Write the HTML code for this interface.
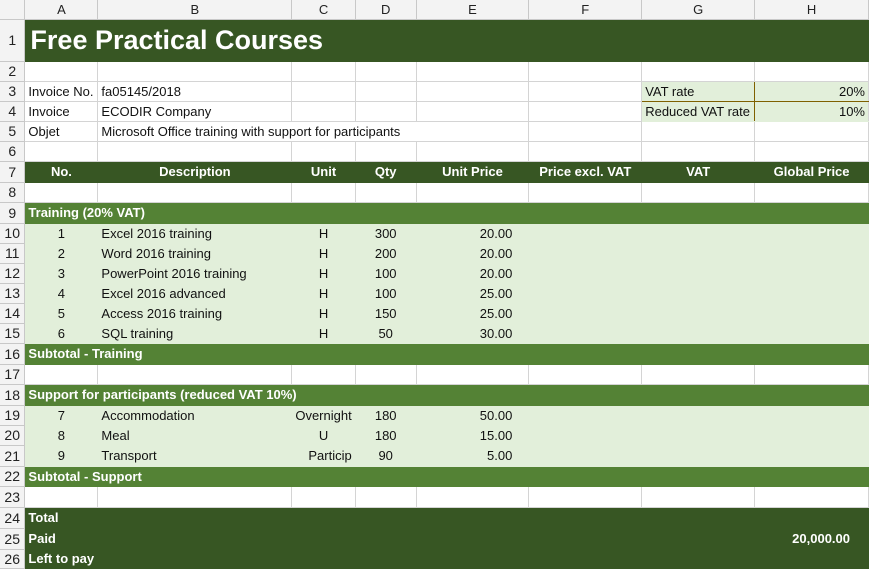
<!DOCTYPE html>
<html><head><meta charset="utf-8"><style>
body{margin:0;background:#fff;width:869px;height:569px;overflow:hidden}
table{border-collapse:collapse;table-layout:fixed;font-family:"Liberation Sans",sans-serif;font-size:13px;color:#111}
td{border-right:1px solid #d4d4d4;border-bottom:1px solid #d4d4d4;padding:0 3px;white-space:nowrap;overflow:visible;line-height:1}
td.h{background:#f3f3f3;color:#222;text-align:center;border-color:#c8c8c8;padding:0;font-size:14px}
tr.ch td{background:#f3f3f3;color:#222;text-align:center;border-color:#c8c8c8}
tr.d td:not(.h){background:#375623;border-color:#375623;color:#fff;font-weight:bold}
tr.m td:not(.h){background:#548235;border-color:#548235;color:#fff;font-weight:bold}
tr.l td:not(.h){background:#e2efda;border-color:#e2efda}
.c{text-align:center}.r{text-align:right;padding-right:16px}
td.lg{background:#e2efda}
</style></head><body>
<table>
<colgroup><col style="width:25px"><col style="width:73px"><col style="width:194px"><col style="width:63px"><col style="width:61px"><col style="width:113px"><col style="width:113px"><col style="width:113px"><col style="width:114px"></colgroup>
<tr class="ch" style="height:19px"><td></td><td>A</td><td>B</td><td>C</td><td>D</td><td>E</td><td>F</td><td>G</td><td>H</td></tr>
<tr class="d" style="height:42px"><td class="h">1</td><td colspan="8" style="font-size:27px;padding-left:5px;overflow:visible">Free Practical Courses</td></tr>
<tr style="height:20px"><td class="h">2</td><td></td><td></td><td></td><td></td><td></td><td></td><td></td><td></td></tr>
<tr style="height:20px"><td class="h">3</td><td>Invoice No.</td><td>fa05145/2018</td><td></td><td></td><td></td><td></td><td class="lg" style="border-right:1px solid #7f6000;border-bottom:1px solid #7f6000">VAT rate</td><td class="lg" style="text-align:right;border-bottom:1px solid #7f6000">20%</td></tr>
<tr style="height:20px"><td class="h">4</td><td>Invoice</td><td>ECODIR Company</td><td></td><td></td><td></td><td></td><td class="lg" style="border-right:1px solid #7f6000;border-bottom-color:#e2efda">Reduced VAT rate</td><td class="lg" style="text-align:right;border-bottom-color:#e2efda">10%</td></tr>
<tr style="height:20px"><td class="h">5</td><td>Objet</td><td colspan="3" style="border-right:none">Microsoft Office training with support for participants</td><td></td><td></td><td></td><td></td></tr>
<tr style="height:20px"><td class="h">6</td><td></td><td></td><td></td><td></td><td></td><td></td><td></td><td></td></tr>
<tr class="d" style="height:21px"><td class="h">7</td><td class="c">No.</td><td class="c">Description</td><td class="c">Unit</td><td class="c">Qty</td><td class="c">Unit Price</td><td class="c">Price excl. VAT</td><td class="c">VAT</td><td class="c">Global Price</td></tr>
<tr style="height:20px"><td class="h">8</td><td></td><td></td><td></td><td></td><td></td><td></td><td></td><td></td></tr>
<tr class="m" style="height:21px"><td class="h">9</td><td colspan="8">Training (20% VAT)</td></tr>
<tr class="l" style="height:20px"><td class="h">10</td><td class="c">1</td><td>Excel 2016 training</td><td class="c">H</td><td class="c">300</td><td class="r">20.00</td><td></td><td></td><td></td></tr>
<tr class="l" style="height:20px"><td class="h">11</td><td class="c">2</td><td>Word 2016 training</td><td class="c">H</td><td class="c">200</td><td class="r">20.00</td><td></td><td></td><td></td></tr>
<tr class="l" style="height:20px"><td class="h">12</td><td class="c">3</td><td>PowerPoint 2016 training</td><td class="c">H</td><td class="c">100</td><td class="r">20.00</td><td></td><td></td><td></td></tr>
<tr class="l" style="height:20px"><td class="h">13</td><td class="c">4</td><td>Excel 2016 advanced</td><td class="c">H</td><td class="c">100</td><td class="r">25.00</td><td></td><td></td><td></td></tr>
<tr class="l" style="height:20px"><td class="h">14</td><td class="c">5</td><td>Access 2016 training</td><td class="c">H</td><td class="c">150</td><td class="r">25.00</td><td></td><td></td><td></td></tr>
<tr class="l" style="height:20px"><td class="h">15</td><td class="c">6</td><td>SQL training</td><td class="c">H</td><td class="c">50</td><td class="r">30.00</td><td></td><td></td><td></td></tr>
<tr class="m" style="height:21px"><td class="h">16</td><td colspan="8">Subtotal - Training</td></tr>
<tr style="height:20px"><td class="h">17</td><td></td><td></td><td></td><td></td><td></td><td></td><td></td><td></td></tr>
<tr class="m" style="height:21px"><td class="h">18</td><td colspan="8">Support for participants (reduced VAT 10%)</td></tr>
<tr class="l" style="height:20px"><td class="h">19</td><td class="c">7</td><td>Accommodation</td><td style="text-align:right">Overnight</td><td class="c">180</td><td class="r">50.00</td><td></td><td></td><td></td></tr>
<tr class="l" style="height:20px"><td class="h">20</td><td class="c">8</td><td>Meal</td><td class="c">U</td><td class="c">180</td><td class="r">15.00</td><td></td><td></td><td></td></tr>
<tr class="l" style="height:21px"><td class="h">21</td><td class="c">9</td><td>Transport</td><td style="text-align:right">Particip</td><td class="c">90</td><td class="r">5.00</td><td></td><td></td><td></td></tr>
<tr class="m" style="height:20px"><td class="h">22</td><td colspan="8">Subtotal - Support</td></tr>
<tr style="height:21px"><td class="h">23</td><td></td><td></td><td></td><td></td><td></td><td></td><td></td><td></td></tr>
<tr class="d" style="height:21px"><td class="h">24</td><td colspan="8">Total</td></tr>
<tr class="d" style="height:21px"><td class="h">25</td><td colspan="7">Paid</td><td class="r" style="padding-right:18px">20,000.00</td></tr>
<tr class="d" style="height:19px"><td class="h">26</td><td colspan="8">Left to pay</td></tr>
</table>
</body></html>
